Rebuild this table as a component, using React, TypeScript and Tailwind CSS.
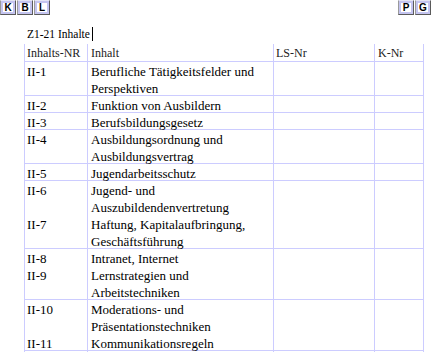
import React from 'react';

type Row = { nr: string[]; text: string[]; lines: number };

const rows: Row[] = [
  { nr: ['II-1'], text: ['Berufliche Tätigkeitsfelder und', 'Perspektiven'], lines: 2 },
  { nr: ['II-2'], text: ['Funktion von Ausbildern'], lines: 1 },
  { nr: ['II-3'], text: ['Berufsbildungsgesetz'], lines: 1 },
  { nr: ['II-4'], text: ['Ausbildungsordnung und', 'Ausbildungsvertrag'], lines: 2 },
  { nr: ['II-5'], text: ['Jugendarbeitsschutz'], lines: 1 },
  {
    nr: ['II-6', '', 'II-7'],
    text: ['Jugend- und', 'Auszubildendenvertretung', 'Haftung, Kapitalaufbringung,', 'Geschäftsführung'],
    lines: 4,
  },
  { nr: ['II-8', 'II-9'], text: ['Intranet, Internet', 'Lernstrategien und', 'Arbeitstechniken'], lines: 3 },
  {
    nr: ['II-10', '', 'II-11'],
    text: ['Moderations- und', 'Präsentationstechniken', 'Kommunikationsregeln'],
    lines: 3,
  },
];

const heights: Record<number, string> = {
  1: 'h-[17px]',
  2: 'h-[34px]',
  3: 'h-[51px]',
  4: 'h-[68px]',
};

function NavButton({ label }: { label: string }) {
  return (
    <div className="w-[16px] h-[15px] border border-t-[#e4e4f4] border-l-[#9a9a9a] border-r-[#5a5a5a] border-b-[#5a5a5a] bg-[#c4c4f0] p-[2px]">
      <div className="w-full h-full bg-white flex items-center justify-center text-[10px] font-bold leading-none text-black font-['Liberation_Sans',sans-serif]">
        {label}
      </div>
    </div>
  );
}

export default function App() {
  return (
    <div className="w-[432px] h-[358px] bg-white overflow-hidden font-['Liberation_Serif',serif] text-black">
      <div className="flex justify-between">
        <div className="flex gap-[1px]">
          <NavButton label="K" />
          <NavButton label="B" />
          <NavButton label="L" />
        </div>
        <div className="flex gap-[1px] pr-[1px]">
          <NavButton label="P" />
          <NavButton label="G" />
        </div>
      </div>

      <div className="pl-[27px] pt-[9px] flex items-center h-[29px]">
        <span className="text-[11.5px] leading-[17px]">Z1-21 Inhalte</span>
        <span className="ml-[2px] w-[1px] h-[14px] bg-black" />
      </div>

      <div className="ml-[24px] w-[400px]">
        <div className="grid grid-cols-[64px_186px_101px_49px] h-[18px] border-b border-[#ccccff] text-[12px] leading-[17px] text-[#222]">
          <div className="border-x border-[#ccccff] pl-[2px] pt-[1px]">Inhalts-NR</div>
          <div className="border-r border-[#ccccff] pl-[3px] pt-[1px]">Inhalt</div>
          <div className="border-r border-[#ccccff] pl-[2px] pt-[1px]">LS-Nr</div>
          <div className="border-r border-[#ccccff] pl-[3px] pt-[1px]">K-Nr</div>
        </div>
        {rows.map((row, i) => (
          <div
            key={i}
            className={`grid grid-cols-[64px_186px_101px_49px] border-b border-[#ccccff] text-[13px] leading-[17px] ${heights[row.lines]}`}
          >
            <div className="border-x border-[#ccccff] pl-[2px] pt-[1px]">
              {row.nr.map((n, j) => (
                <div key={j} className="h-[17px]">
                  {n}
                </div>
              ))}
            </div>
            <div className="border-r border-[#ccccff] pl-[3px] pt-[1px]">
              {row.text.map((t, j) => (
                <div key={j} className="h-[17px] whitespace-nowrap">
                  {t}
                </div>
              ))}
            </div>
            <div className="border-r border-[#ccccff]" />
            <div className="border-r border-[#ccccff]" />
          </div>
        ))}
      </div>
    </div>
  );
}
